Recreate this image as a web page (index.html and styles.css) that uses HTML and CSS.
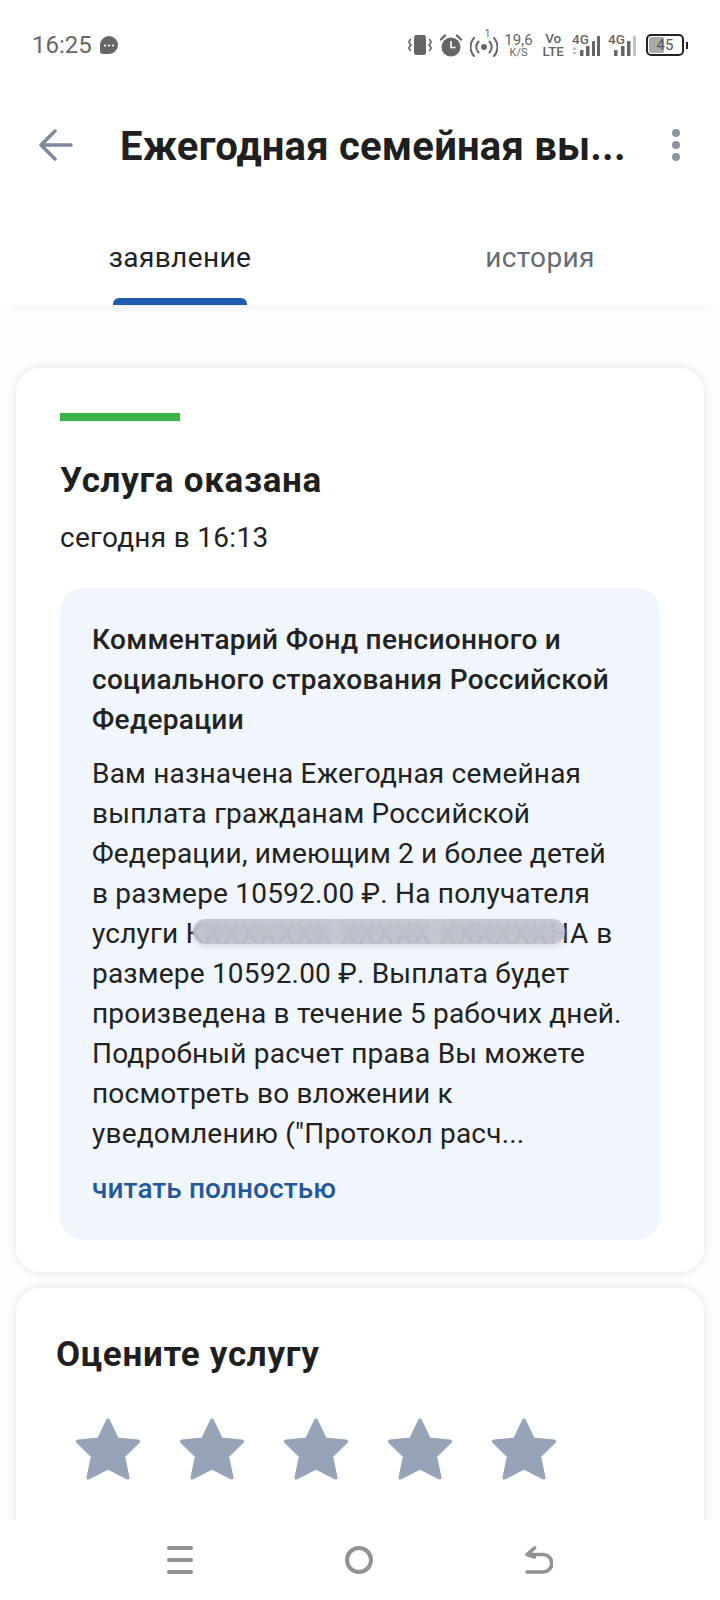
FILE: index.html
```html
<!DOCTYPE html>
<html lang="ru">
<head>
    <meta charset="UTF-8">
    <meta name="viewport" content="width=device-width, initial-scale=1.0">
    <title>Ежегодная семейная выплата</title>
    <link rel="stylesheet" href="styles.css">
</head>
<body>
    <div class="screen">
        <!-- Строка состояния -->
        <div class="status">
            <div class="status-left">
                <span class="time">16:25</span>
                <svg class="chat" width="18" height="18" viewBox="0 0 18 18">
                    <path d="M9 0a9 9 0 0 1 0 18H3a3 3 0 0 1-3-3V9a9 9 0 0 1 9-9z" fill="#666"/>
                    <circle cx="5" cy="9.5" r="1.1" fill="#fff"/>
                    <circle cx="9" cy="9.5" r="1.1" fill="#fff"/>
                    <circle cx="13" cy="9.5" r="1.1" fill="#fff"/>
                </svg>
            </div>
            <div class="status-right">
                <svg width="24" height="22" viewBox="0 0 24 22">
                    <rect x="6" y="1" width="12" height="20" rx="2.500" fill="#666"/>
                    <path d="M2.800 5 0.800 8l2.200 3-2.200 3 2 3M21.200 5l2 3-2.200 3 2.200 3-2 3" fill="none" stroke="#666" stroke-width="1.500"/>
                </svg>
                <svg class="alarm" width="22" height="23" viewBox="0 0 22 23">
                    <circle cx="11" cy="13" r="9.500" fill="#666"/>
                    <path d="M11 7v6.500h4.500" fill="none" stroke="#fff" stroke-width="1.600"/>
                    <path d="M1 5.500 5 1.500M21 5.500l-4-4" stroke="#666" stroke-width="2.400" stroke-linecap="round"/>
                </svg>
                <div class="hotspot">
                    <svg width="28" height="21" viewBox="0 0 28 21">
                        <circle cx="14" cy="11" r="3" fill="#666"/>
                        <path d="M8.500 5.500a8 8 0 0 0 0 11M19.500 5.500a8 8 0 0 1 0 11M4 2a13.500 13.500 0 0 0 0 18M24 2a13.500 13.500 0 0 1 0 18" fill="none" stroke="#666" stroke-width="2" stroke-linecap="round"/>
                    </svg>
                    <span class="hotspot-num">1</span>
                </div>
                <div class="speed">
                    <span class="speed-num">19,6</span>
                    <span class="speed-unit">K/S</span>
                </div>
                <div class="volte">
                    <span>Vo</span>
                    <span>LTE</span>
                </div>
                <div class="signal">
                    <span class="signal-label">4G</span>
                    <svg width="28" height="21" viewBox="0 0 28 21">
                        <path d="M0 15l2.500-3 2.500 3zM0 17l2.500 3 2.500-3z" fill="#bbb"/>
                        <rect x="8" y="15" width="3.500" height="6" rx=".5" fill="#666"/>
                        <rect x="14" y="11" width="3.500" height="10" rx=".5" fill="#666"/>
                        <rect x="20" y="6" width="3" height="15" rx=".5" fill="#666"/>
                        <rect x="25" y="1" width="3" height="20" rx=".5" fill="#666"/>
                    </svg>
                </div>
                <div class="signal signal-second">
                    <span class="signal-label">4G</span>
                    <svg width="22" height="21" viewBox="0 0 22 21">
                        <rect x="0" y="15" width="3.500" height="6" rx=".5" fill="#666"/>
                        <rect x="7" y="11" width="3.500" height="10" rx=".5" fill="#666"/>
                        <rect x="13" y="6" width="3.500" height="15" rx=".5" fill="#666"/>
                        <rect x="19" y="1" width="3" height="20" rx=".5" fill="#c4c4c4"/>
                    </svg>
                </div>
                <div class="battery">
                    <div class="battery-body">
                        <div class="battery-level"></div>
                        <span class="battery-num">45</span>
                    </div>
                    <div class="battery-tip"></div>
                </div>
            </div>
        </div>

        <!-- Заголовок -->
        <div class="topbar">
            <svg class="back" width="34" height="32" viewBox="0 0 34 32">
                <path d="M16 2 2 16l14 14M2 16h30" fill="none" stroke="#7d8a9e" stroke-width="3.500" stroke-linecap="round" stroke-linejoin="round"/>
            </svg>
            <h1 class="title">Ежегодная семейная вы...</h1>
            <div class="dots">
                <span></span>
                <span></span>
                <span></span>
            </div>
        </div>

        <!-- Вкладки -->
        <div class="tabs">
            <div class="tab tab-active">
                <span>заявление</span>
                <div class="tab-line"></div>
            </div>
            <div class="tab">
                <span>история</span>
            </div>
        </div>

        <div class="content">
            <div class="card card-status">
                <div class="status-line"></div>
                <h2 class="card-title">Услуга оказана</h2>
                <div class="card-date">сегодня в 16:13</div>

                <div class="comment">
                    <h3 class="comment-title">Комментарий Фонд пенсионного и социального страхования Российской Федерации</h3>
                    <p class="comment-text">Вам назначена Ежегодная семейная выплата гражданам Российской Федерации, имеющим 2 и более детей в размере 10592.00 ₽. На получателя услуги <span class="hidden-name">КХХХХХХХ ХХХХХ ХХХХХХНА<i class="blur"></i></span> в размере 10592.00 ₽. Выплата будет произведена в течение 5 рабочих дней. Подробный расчет права Вы можете посмотреть во вложении к уведомлению ("Протокол расч...</p>
                    <div class="read-more">читать полностью</div>
                </div>
            </div>

            <div class="card card-rate">
                <h2 class="card-title">Оцените услугу</h2>
                <div class="stars">
                    <svg class="star" viewBox="0 0 64 62"><use href="#star"/></svg>
                    <svg class="star" viewBox="0 0 64 62"><use href="#star"/></svg>
                    <svg class="star" viewBox="0 0 64 62"><use href="#star"/></svg>
                    <svg class="star" viewBox="0 0 64 62"><use href="#star"/></svg>
                    <svg class="star" viewBox="0 0 64 62"><use href="#star"/></svg>
                </div>
            </div>
        </div>

        <!-- Системная навигация -->
        <div class="navbar">
            <div class="nav-menu">
                <span></span>
                <span></span>
                <span></span>
            </div>
            <div class="nav-home"></div>
            <svg class="nav-back" width="28" height="30" viewBox="0 0 28 30">
                <path d="M2 27h16a8 8 0 0 0 0-17.500H2M2 9.500 9.500 3M2 9.500l7.500 2.500" fill="none" stroke="#929292" stroke-width="3.600" stroke-linecap="round" stroke-linejoin="round"/>
            </svg>
        </div>
    </div>

    <svg width="0" height="0" class="defs">
        <symbol id="star" viewBox="0 0 64 62">
            <path d="M32 2.500 41 21.500 62 23.500 47 38 51.500 59.500 32 49.500 12.500 59.500 17 38 2 23.500 23 21.500z" fill="#97a4b8" stroke="#97a4b8" stroke-width="4" stroke-linejoin="round"/>
        </symbol>
    </svg>
</body>
</html>
```

FILE: styles.css
```css
* {
    box-sizing: border-box;
}

body {
    margin: 0;
    font-family: 'Roboto', sans-serif;
    background-color: #ffffff;
}

.defs {
    position: absolute;
}

.screen {
    width: 720px;
    height: 1600px;
    display: flex;
    flex-direction: column;
    overflow: hidden;
    background-color: #ffffff;
}

/* Строка состояния */
.status {
    height: 90px;
    flex-shrink: 0;
    display: flex;
    justify-content: space-between;
    align-items: center;
    padding: 0 32px 0 32px;
    color: #666666;
}

.status-left {
    display: flex;
    align-items: center;
    gap: 8px;
}

.time {
    font-size: 24px;
}

.status-right {
    display: flex;
    align-items: center;
    gap: 8px;
}

.hotspot {
    position: relative;
    width: 28px;
    height: 24px;
    display: flex;
    align-items: flex-end;
    margin-right: -3px;
}

.hotspot-num {
    position: absolute;
    top: -5px;
    right: 8px;
    font-size: 10px;
}

.speed {
    display: flex;
    flex-direction: column;
    align-items: center;
    width: 28px;
    margin-left: 1px;
}

.speed-num {
    font-size: 15px;
    line-height: 14px;
}

.speed-unit {
    font-size: 11px;
    line-height: 11px;
}

.volte {
    display: flex;
    flex-direction: column;
    align-items: center;
    font-size: 13.5px;
    font-weight: 500;
    line-height: 13px;
    margin-left: 2px;
}

.signal {
    position: relative;
    width: 28px;
    height: 21px;
    display: flex;
}

.signal-second {
    width: 28px;
    justify-content: flex-end;
}

.signal-label {
    position: absolute;
    top: -4px;
    left: 0;
    font-size: 13.5px;
    font-weight: 500;
}

.battery {
    display: flex;
    align-items: center;
    gap: 2px;
    margin-left: 2px;
}

.battery-body {
    position: relative;
    width: 38px;
    height: 22px;
    border: 2px solid #222222;
    border-radius: 5px;
    display: flex;
    align-items: center;
    justify-content: center;
}

.battery-level {
    position: absolute;
    left: 1px;
    top: 1px;
    bottom: 1px;
    width: 45%;
    background-color: #a9a9a9;
    border-radius: 2px;
}

.battery-num {
    position: relative;
    font-size: 15px;
    color: #555555;
}

.battery-tip {
    width: 2px;
    height: 7px;
    background-color: #222222;
}

/* Заголовок */
.topbar {
    height: 110px;
    flex-shrink: 0;
    display: flex;
    align-items: center;
    padding: 0 40px 0 39px;
}

.back {
    flex-shrink: 0;
}

.title {
    margin: 4px 0 0 47px;
    font-size: 40px;
    font-weight: 700;
    letter-spacing: 0.200px;
    line-height: 50px;
    color: #1f1f1f;
    white-space: nowrap;
}

.dots {
    margin-left: auto;
    display: flex;
    flex-direction: column;
    gap: 4px;
    margin-top: -1px;
}

.dots span {
    width: 8px;
    height: 8px;
    border-radius: 50%;
    background-color: #9092a0;
}

/* Вкладки */
.tabs {
    height: 105px;
    flex-shrink: 0;
    display: flex;
    background-color: #ffffff;
    box-shadow: 0 8px 10px -8px rgba(0, 0, 0, 0.07);
    border-radius: 0 0 12px 12px;
    position: relative;
}

.tab {
    width: 50%;
    padding-top: 38px;
    text-align: center;
    font-size: 28px;
    line-height: 40px;
    letter-spacing: 0.400px;
    color: #666b75;
    display: flex;
    flex-direction: column;
    align-items: center;
}

.tab-active {
    color: #222222;
}

.tab-line {
    width: 134px;
    height: 7px;
    margin-top: 20px;
    background-color: #1f5bb0;
    border-radius: 6px 6px 0 0;
}

/* Карточки */
.content {
    flex: 1;
    min-height: 0;
    overflow: hidden;
    background-color: #fdfdfd;
    padding: 63px 16px 0;
}

.card {
    background-color: #ffffff;
    border-radius: 24px;
    box-shadow: 0 0 9px rgba(0, 0, 0, 0.09);
}

.card-status {
    padding: 45px 44px 32px;
    margin-bottom: 16px;
}

.status-line {
    width: 120px;
    height: 8px;
    background-color: #39b54a;
}

.card-title {
    margin: 38px 0 0;
    font-size: 35px;
    font-weight: 700;
    letter-spacing: 0.700px;
    line-height: 44px;
    color: #1f1f1f;
}

.card-date {
    margin-top: 17px;
    font-size: 28px;
    letter-spacing: 0.300px;
    line-height: 36px;
    color: #222222;
}

.comment {
    margin-top: 32px;
    padding: 32px 32px 31px;
    background-color: #f1f5fc;
    border-radius: 24px;
}

.comment-title {
    margin: 0;
    font-size: 28px;
    font-weight: 500;
    letter-spacing: 0.300px;
    line-height: 40px;
    color: #222222;
}

.comment-text {
    margin: 14px 0 0;
    font-size: 28px;
    letter-spacing: 0.200px;
    line-height: 40px;
    color: #222222;
}

.hidden-name {
    position: relative;
    letter-spacing: 0.750px;
}

/* имя в оригинале замазано */
.blur {
    position: absolute;
    left: 8px;
    right: 24px;
    top: 2px;
    bottom: 6px;
    border-radius: 14px;
    background-color: rgba(190, 195, 204, 0.85);
    box-shadow: 0 3px 5px rgba(190, 195, 205, 0.5);
    backdrop-filter: blur(8px);
}

.read-more {
    margin-top: 15px;
    font-size: 28px;
    font-weight: 500;
    letter-spacing: 0.100px;
    line-height: 40px;
    color: #23599c;
}

.card-rate {
    padding: 45px 40px 0;
    height: 300px;
}

.card-rate .card-title {
    margin: 0;
}

.stars {
    display: flex;
    gap: 40px;
    margin: 41px 0 0 20px;
}

.star {
    width: 64px;
    height: 62px;
}

/* Системная навигация */
.navbar {
    height: 80px;
    flex-shrink: 0;
    display: flex;
    justify-content: center;
    align-items: flex-start;
    gap: 152px;
    padding-top: 26px;
    background-color: #ffffff;
    position: relative;
}

.nav-menu {
    width: 26px;
    height: 28px;
    display: flex;
    flex-direction: column;
    justify-content: space-between;
}

.nav-menu span {
    height: 4px;
    border-radius: 2px;
    background-color: #929292;
}

.nav-home {
    width: 28px;
    height: 28px;
    border: 4px solid #929292;
    border-radius: 50%;
}

.nav-back {
    margin-top: -1px;
}
```
